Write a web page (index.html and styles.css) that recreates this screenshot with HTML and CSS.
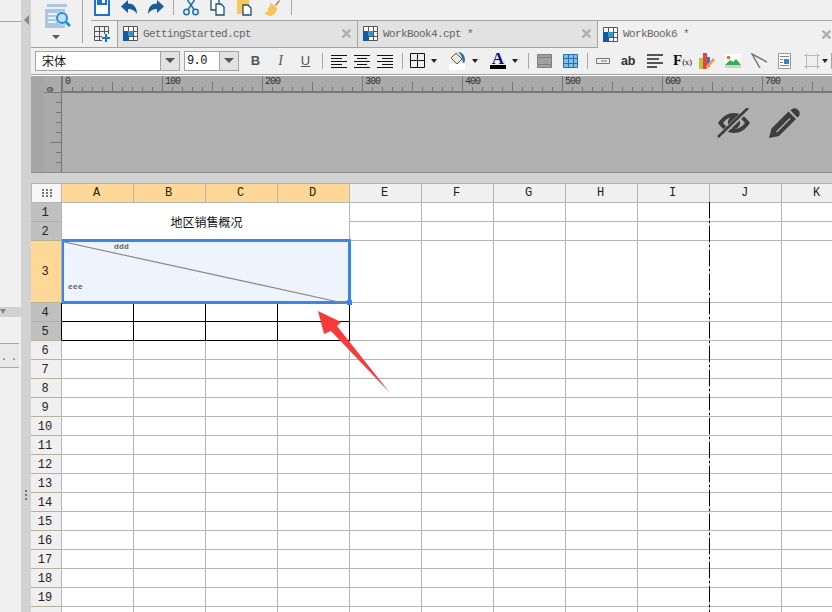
FILE: index.html
```html
<!DOCTYPE html>
<html lang="zh">
<head>
<meta charset="utf-8">
<title>WorkBook6</title>
<link rel="stylesheet" href="styles.css">
</head>
<body>
<div class="app">
  <aside class="side">
    <div class="side-top"></div>
    <div class="side-bar"><span class="side-tri"></span></div>
    <div class="side-btn">. .</div>
  </aside>
  <div class="split">
    <span class="split-tri"></span>
    <span class="split-dots"></span>
  </div>
  <main class="main">
    <div class="top">
      <div class="preview">
        <svg width="26" height="24" viewBox="0 0 26 24"><path fill="#a9c6e2" d="M2 0h20v3H2zM0 5h20v19H0z"/><path fill="#f0f0f0" d="M3 9h10v2H3zM3 13h7v2H3zM3 17h8v2H3z"/><circle cx="17" cy="14" r="6.5" fill="#f0f0f0"/><circle cx="17" cy="14" r="5" fill="#bfe0f7" stroke="#1d8fdc" stroke-width="2"/><path d="M21 18l4 4" stroke="#1d8fdc" stroke-width="3"/></svg>
        <span class="tri tri-preview"></span>
      </div>
      <div class="top-right">
        <div class="quick">
          <svg class="qi" width="16" height="16" viewBox="0 0 16 16"><path fill="#fff" stroke="#1e6fdc" stroke-width="2" d="M1 -2h14v17H1z"/><path fill="#1e6fdc" d="M3 0h10v5H3z"/><path fill="#fff" d="M8 0h3v3H8z"/></svg>
          <svg class="qi" width="16" height="15" viewBox="0 0 16 15"><path fill="#1a5d97" d="M0 6.5L7 0v3.5c5 0 9 3 9 10.500c-2-3.500-5-5-9-5v4z"/></svg>
          <svg class="qi" width="16" height="15" viewBox="0 0 16 15"><path fill="#1a5d97" d="M16 6.500L9 0v3.500c-5 0-9 3-9 10.500c2-3.500 5-5 9-5v4z"/></svg>
          <span class="sep sep-quick"></span>
          <svg class="qi ml9" width="16" height="16" viewBox="0 0 16 16"><g fill="none" stroke="#1b6fb5" stroke-width="1.500"><circle cx="3.500" cy="12" r="2.700"/><circle cx="12.500" cy="12" r="2.700"/><path d="M5 9.500L11.500 0M11 9.500L4.500 0"/></g></svg>
          <svg class="qi ml10" width="16" height="16" viewBox="0 0 16 16"><g fill="#fff" stroke="#1c4f7a" stroke-width="1.300"><path d="M1 -2h8v12H1z"/><path d="M6 4h5l3 3v8H6z"/></g></svg>
          <svg class="qi ml11" width="16" height="16" viewBox="0 0 16 16"><path fill="#f8c85a" d="M0 0h12v14H0z"/><path fill="#fff" stroke="#1c4f7a" stroke-width="1.300" d="M6 5h5l3 3v7H6z"/></svg>
          <svg class="qi ml11" width="16" height="16" viewBox="0 0 16 16"><path fill="#a67c3c" d="M11 5l4-5 1 1-4 5z"/><path fill="#f6c25c" d="M7 3l6 5c0 4-3 7-6 8-2 0-5-1-7-3 3 0 4-2 4-4z"/></svg>
          <span class="sep sep-quick ml9"></span>
        </div>
        <div class="tabs">
          <div class="tab-new">
            <svg width="16" height="16" viewBox="0 0 16 16"><path fill="none" stroke="#555" d="M.5.500h14v14H.5zM5.500.500v14M10.500.500v14M.5 5.500h14M.5 10.500h14"/><path fill="#f0f0f0" d="M8 8h8v8H8z"/><path fill="#1272c4" d="M11 8h2v3h3v2h-3v3h-2v-3H8v-2h3z"/></svg>
          </div>
          <div class="tab tab-one">
            <svg class="tab-icon" width="15" height="15" viewBox="0 0 15 15"><path fill="#fff" stroke="#555" d="M.5.500h14v14H.5zM5.500.500v14M10.500.500v14M.5 5.500h14M.5 10.500h14"/><path fill="#125a9e" d="M0 5h5v10H0z"/><path fill="#2a9ad8" d="M5 5h5v5H5z"/><path fill="#125a9e" d="M5 11h1v4H5z"/></svg>
            <span class="tab-name">GettingStarted.cpt</span>
            <svg class="tab-x" width="9" height="9" viewBox="0 0 9 9"><path stroke="#b0b0b0" stroke-width="2.400" d="M.5.500l8 8M8.500.500l-8 8"/></svg>
          </div>
          <div class="tab tab-two">
            <svg class="tab-icon" width="15" height="15" viewBox="0 0 15 15"><path fill="#fff" stroke="#555" d="M.5.500h14v14H.5zM5.500.500v14M10.500.500v14M.5 5.500h14M.5 10.500h14"/><path fill="#125a9e" d="M0 5h5v10H0z"/><path fill="#2a9ad8" d="M5 5h5v5H5z"/><path fill="#125a9e" d="M5 11h1v4H5z"/></svg>
            <span class="tab-name">WorkBook4.cpt *</span>
            <svg class="tab-x" width="9" height="9" viewBox="0 0 9 9"><path stroke="#b0b0b0" stroke-width="2.400" d="M.5.500l8 8M8.500.500l-8 8"/></svg>
          </div>
          <div class="tab tab-active">
            <svg class="tab-icon" width="15" height="15" viewBox="0 0 15 15"><path fill="#fff" stroke="#555" d="M.5.500h14v14H.5zM5.500.500v14M10.500.500v14M.5 5.500h14M.5 10.500h14"/><path fill="#125a9e" d="M0 5h5v10H0z"/><path fill="#2a9ad8" d="M5 5h5v5H5z"/><path fill="#125a9e" d="M5 11h1v4H5z"/></svg>
            <span class="tab-name">WorkBook6 *</span>
            <svg class="tab-x" width="9" height="9" viewBox="0 0 9 9"><path stroke="#b0b0b0" stroke-width="2.400" d="M.5.500l8 8M8.500.500l-8 8"/></svg>
          </div>
        </div>
      </div>
    </div>

    <div class="fmt">
      <div class="combo combo-font"><span class="combo-text cjk">宋体</span><span class="combo-btn"><span class="tri tri-combo"></span></span></div>
      <div class="combo combo-size"><span class="combo-text mono">9.0</span><span class="combo-btn"><span class="tri tri-combo"></span></span></div>
      <span class="tb tb-b">B</span>
      <span class="tb tb-i">I</span>
      <span class="tb tb-u">U</span>
      <span class="sep sep-fmt"></span>
      <svg class="al first" width="16" height="14" viewBox="0 0 16 14"><path stroke="#111" d="M0 1.500h16M0 4.500h11M0 7.500h16M0 10.500h11M0 13.500h16"/></svg>
      <svg class="al" width="16" height="14" viewBox="0 0 16 14"><path stroke="#111" d="M0 1.500h16M3 4.500h10M0 7.500h16M3 10.500h10M0 13.500h16"/></svg>
      <svg class="al" width="16" height="14" viewBox="0 0 16 14"><path stroke="#111" d="M0 1.500h16M5 4.500h11M0 7.500h16M5 10.500h11M0 13.500h16"/></svg>
      <span class="sep sep-fmt ml9"></span>
      <svg class="ml7" width="15" height="15" viewBox="0 0 15 15"><path fill="none" stroke="#111" d="M.5.500h14v14H.5zM7.500.500v14M.5 7.500h14"/></svg>
      <span class="tri tri-small ml6"></span>
      <svg class="ml12" width="17" height="19" viewBox="0 0 17 19"><path fill="#fff" d="M0 13h16v6H0z"/><path fill="#f0e8d8" stroke="#555" d="M2 7l5-5 6 6-5 5z"/><path fill="#2d6ea8" d="M9 1c4 0 7 3 7 8 0 2-1 3-2 3l-1-5c-1-3-2-4-4-6z"/></svg>
      <span class="tri tri-small ml6"></span>
      <div class="color-a ml12"><span class="color-letter">A</span><span class="color-bar"></span></div>
      <span class="tri tri-small ml6"></span>
      <span class="sep sep-fmt ml10"></span>
      <svg class="ml8" width="15" height="14" viewBox="0 0 15 14"><path fill="#a0a0a0" stroke="#808080" d="M.5.500h14v13H.5z"/><path fill="none" stroke="#808080" d="M.5 3.500h14M.5 10.500h14"/></svg>
      <svg class="ml11" width="15" height="14" viewBox="0 0 15 14"><path fill="#7cc0ec" stroke="#2f6ea6" d="M.5.500h14v13H.5z"/><path fill="none" stroke="#2f6ea6" d="M5.500.500v13M10.500.500v13M.5 4.500h14M.5 9.500h14"/></svg>
      <span class="sep sep-fmt ml9"></span>
      <svg class="ml8" width="14" height="6" viewBox="0 0 14 6"><path fill="none" stroke="#777" d="M.5.500h13v5H.5z"/><path stroke="#777" d="M5 3h6"/></svg>
      <span class="tb-ab">ab</span>
      <svg class="ml12" width="16" height="14" viewBox="0 0 16 14"><path fill="#555" d="M0 0h16v2H0zM0 4h12v2H0zM0 8h16v2H0zM0 12h10v2H0z"/></svg>
      <span class="tb-fx">F<small>(x)</small></span>
      <svg class="ml6" width="16" height="16" viewBox="0 0 16 16"><path fill="#b7c23f" d="M0 5h4v11H0z"/><path fill="#e8413c" d="M4 0h4v16H4z"/><path fill="#2a78c8" d="M8 4h3v10H8z"/><path fill="#f59a4a" d="M7 13l7-8 2 2-7 8-2 1z"/></svg>
      <svg class="ml10" width="16" height="14" viewBox="0 0 16 14"><path fill="#fff" d="M0 0h16v11H0z"/><path fill="#d0d0d0" d="M0 11h16v3H0z"/><path fill="#2fb14f" d="M0 11l5-5 3 2 3-3 5 6z"/><path fill="#e96a3a" d="M2 2h3v3H2z"/></svg>
      <svg class="ml10" width="16" height="15" viewBox="0 0 16 15"><path fill="none" stroke="#777" stroke-width="1.500" d="M9 15L1 1l15 8"/></svg>
      <svg class="ml11" width="13" height="16" viewBox="0 0 13 16"><path fill="#fff" stroke="#999" d="M.5.500h12v15H.5z"/><path fill="#888" d="M2 3h9v1H2zM2 6h3v1H2zM2 9h3v1H2zM2 12h9v1H2z"/><path fill="#2a8ad0" d="M6 6h5v5H6z"/></svg>
      <svg class="ml13" width="16" height="16" viewBox="0 0 16 16"><path fill="none" stroke="#b8b8b8" d="M2.500 0v16M13.500 0v16M0 2.500h16M0 13.500h16"/></svg>
      <span class="tri tri-small ml2"></span>
      <span class="sep sep-fmt ml3"></span>
    </div>
    <div class="white-line"></div>

    <div class="stage">
      <div class="vruler">
        <div class="vband">
          <div class="vcorner"><span class="vzero">0</span></div>
          <div class="vticks"></div>
        </div>
      </div>
      <div class="stage-right">
        <div class="hruler">
          <span class="rl">0</span><span class="rl">100</span><span class="rl">200</span><span class="rl">300</span><span class="rl">400</span><span class="rl">500</span><span class="rl">600</span><span class="rl">700</span>
        </div>
        <div class="canvas">
          <svg width="34" height="30" viewBox="0 0 34 30"><path fill="#3d3d3d" fill-rule="evenodd" d="M1 15C6 8 11 5 17 5s11 3 16 10c-5 7-10 10-16 10S6 22 1 15zm5 0c3 4 7 6 11 6 4 0 8-2 11-6-2-3-5-5-8-6 2 1 3 3 3 6 0 3-3 6-6 6s-6-3-6-6c0-3 1-5 3-6-3 1-6 3-8 6z"/><path stroke="#b0b0b0" stroke-width="5" d="M2 29L31 1"/><path stroke="#3d3d3d" stroke-width="2.500" d="M1 29L31 0"/></svg>
          <svg width="31" height="30" viewBox="0 0 31 30"><path fill="#3d3d3d" fill-rule="evenodd" d="M0 30L2.500 20.500 19.500 3.500 27 11 10 28zM7 23.500L8 24.500 21.500 11 20.500 10z"/><path fill="#3d3d3d" d="M21.500 2.500c2-2.500 5-3 7-1l1 1c2 2 1.500 5-1 7z"/></svg>
        </div>
      </div>
    </div>
    <div class="gap"></div>

    <div class="sheet">
      <div class="row-head">
        <div class="corner"><span class="corner-dots"></span></div>
        <div class="ch sel">A</div><div class="ch sel">B</div><div class="ch sel">C</div><div class="ch sel">D</div>
        <div class="ch">E</div><div class="ch">F</div><div class="ch">G</div><div class="ch">H</div><div class="ch">I</div><div class="ch">J</div><div class="ch">K</div>
      </div>
      <div class="row"><div class="rh merged">1</div><div class="cells"></div></div>
      <div class="row"><div class="rh merged">2</div><div class="cells"></div></div>
      <div class="row row-tall"><div class="rh sel">3</div><div class="cells"></div></div>
      <div class="row"><div class="rh merged black">4</div><div class="cells"><div class="bk"></div><div class="bk"></div><div class="bk"></div><div class="bk"></div></div></div>
      <div class="row"><div class="rh merged black">5</div><div class="cells"><div class="bk"></div><div class="bk"></div><div class="bk"></div><div class="bk"></div></div></div>
      <div class="row"><div class="rh">6</div><div class="cells"></div></div>
      <div class="row"><div class="rh">7</div><div class="cells"></div></div>
      <div class="row"><div class="rh">8</div><div class="cells"></div></div>
      <div class="row"><div class="rh">9</div><div class="cells"></div></div>
      <div class="row"><div class="rh">10</div><div class="cells"></div></div>
      <div class="row"><div class="rh">11</div><div class="cells"></div></div>
      <div class="row"><div class="rh">12</div><div class="cells"></div></div>
      <div class="row"><div class="rh">13</div><div class="cells"></div></div>
      <div class="row"><div class="rh">14</div><div class="cells"></div></div>
      <div class="row"><div class="rh">15</div><div class="cells"></div></div>
      <div class="row"><div class="rh">16</div><div class="cells"></div></div>
      <div class="row"><div class="rh">17</div><div class="cells"></div></div>
      <div class="row"><div class="rh">18</div><div class="cells"></div></div>
      <div class="row"><div class="rh">19</div><div class="cells"></div></div>
      <div class="row"><div class="rh"></div><div class="cells"></div></div>

      <div class="title cjk">地区销售概况</div>
      <div class="selection">
        <svg class="diag" width="284" height="62" viewBox="0 0 284 62"><path stroke="#888" stroke-width="1.200" d="M0 0L284 62"/></svg>
        <span class="slash-top">ddd</span>
        <span class="slash-bottom">eee</span>
        <span class="handle"></span>
      </div>
      <div class="page-break"></div>
      <svg class="arrow" width="73" height="83" viewBox="0 0 73 83"><path fill="#f73b3b" d="M0 0L23 11 19 15 72 82 13 20 6 23z"/></svg>
    </div>
  </main>
</div>
</body>
</html>
```

FILE: styles.css
```css
* { box-sizing: border-box; }
html, body { margin: 0; padding: 0; height: 100%; overflow: hidden; background: #f0f0f0; }
body { font-family: "Liberation Mono", monospace; color: #222; }
svg { display: block; flex: none; }
.cjk { font-family: "Noto Sans CJK SC", "Liberation Sans", sans-serif; }
.mono { font-family: "Liberation Mono", monospace; }

.app { display: flex; width: 832px; height: 612px; overflow: hidden; }

/* left dock */
.side { width: 21px; flex: none; display: flex; flex-direction: column; background: #f0f0f0; }
.side-top { height: 22px; margin-bottom: 285px; border-bottom: 1px solid #a4a4a4; }
.side-bar { height: 10px; background: #d2d2d2; }
.side-tri { display: block; width: 0; border-style: solid; border-width: 5px 3.500px 0; border-color: #888 transparent transparent; margin-top: 2px; }
.side-btn { margin-top: 26px; width: 19px; height: 25px; background: #e9e9e9; border-top: 1px solid #a8a8a8; border-bottom: 1px solid #a8a8a8; font-size: 10px; line-height: 27px; white-space: nowrap; overflow: hidden; padding-left: 1px; letter-spacing: -1px; color: #555; }
.split { width: 10px; flex: none; background: #d2d2d2; position: relative; }
.split-tri { position: absolute; left: 3px; top: 15px; width: 0; border-style: solid; border-width: 5px 5px 5px 0; border-color: transparent #888 transparent transparent; }
.split-dots { position: absolute; left: 4px; top: 490px; width: 2px; height: 10px; background: repeating-linear-gradient(#777 0 2px, transparent 2px 4px); }

.main { width: 801px; flex: none; display: flex; flex-direction: column; background: #f0f0f0; }

/* top toolbars */
.top { display: flex; height: 48px; flex: none; }
.preview { width: 60px; flex: none; position: relative; padding: 4px 0 0 14px; border-bottom: 1px solid #a4a4a4; }
.preview::after { content: ""; position: absolute; left: 51px; top: 0; width: 1px; height: 43px; background: #a8a8a8; }
.tri { display: block; width: 0; border-style: solid; border-color: #555 transparent transparent; flex: none; }
.tri-preview { border-width: 4px 4.500px 0; margin: 7px 0 0 7px; }
.top-right { flex: 1; min-width: 0; display: flex; flex-direction: column; }
.quick { height: 20px; display: flex; align-items: flex-start; padding-left: 3px; overflow: hidden; }
.qi { margin-right: 11px; margin-top: 0; }
.sep { display: block; width: 1px; background: #a8a8a8; flex: none; }
.sep-quick { height: 15px; margin-left: -2px; }
.ml9.sep-quick { margin-left: -2px; }
.quick .ml9 { margin-left: 0; }
.quick .ml10 { margin-left: 0; }
.quick .ml11 { margin-left: 0; }
.quick .sep { margin-right: 9px; }
.quick .qi:last-of-type { margin-right: 11px; }

.tabs { height: 28px; display: flex; border-top: 1px solid #a4a4a4; }
.tab-new { width: 27px; flex: none; padding: 5px 0 0 3px; border-right: 1px solid #a4a4a4; border-bottom: 1px solid #a4a4a4; background: #f0f0f0; }
.tab { width: 240px; flex: none; display: flex; align-items: center; padding: 0 6px 1px 5px; background: #e2e2e2; border-right: 1px solid #a4a4a4; border-bottom: 1px solid #a4a4a4; }
.tab-two { padding-right: 6px; }
.tab-active { background: #f0f0f0; border-right: 0; border-bottom: 0; width: 235px; padding-right: 2px; }
.tab-icon { margin-right: 5px; }
.tab-name { flex: 1; font-size: 11px; letter-spacing: -.6px; color: #666; white-space: nowrap; }

/* format bar */
.fmt { height: 27px; flex: none; display: flex; align-items: center; padding: 0 0 1px 4px; border-bottom: 1px solid #a4a4a4; }
.combo { height: 20px; display: flex; background: #fff; border: 1px solid #a4a4a4; flex: none; }
.combo-font { width: 145px; }
.combo-size { width: 55px; margin-left: 4px; }
.combo-text { flex: 1; font-size: 12px; line-height: 18px; padding-left: 6px; color: #111; }
.combo-size .combo-text { padding-left: 2px; font-size: 12px; letter-spacing: -.6px; }
.combo-btn { width: 19px; flex: none; background: #e2e2e2; border-left: 1px solid #a4a4a4; display: flex; align-items: center; justify-content: center; }
.tri-combo { border-width: 5px 5px 0; border-top-color: #555; }
.tb { width: 25px; flex: none; text-align: center; font-size: 13px; color: #555; }
.tb-b { margin-left: 4px; font-family: "Liberation Sans", sans-serif; font-weight: 700; }
.tb-i { font-family: "Liberation Serif", serif; font-style: italic; font-size: 14px; }
.tb-u { font-family: "Liberation Sans", sans-serif; text-decoration: underline; }
.sep-fmt { height: 16px; margin-left: 4px; }
.al { margin-left: 7px; }
.al.first { margin-left: 8px; }
.ml2 { margin-left: 2px; } .ml3 { margin-left: 3px; } .ml6 { margin-left: 6px; } .ml7 { margin-left: 7px; }
.ml8 { margin-left: 8px; } .ml9 { margin-left: 9px; } .ml10 { margin-left: 10px; } .ml11 { margin-left: 11px; }
.ml12 { margin-left: 12px; } .ml13 { margin-left: 13px; }
.tri-small { border-width: 4px 3.500px 0; border-top-color: #222; }
.color-a { width: 16px; flex: none; height: 17px; display: flex; flex-direction: column; align-items: center; }
.color-letter { font-family: "Liberation Serif", serif; font-weight: 700; font-size: 17px; line-height: 13px; color: #0b0b8c; }
.color-bar { width: 16px; height: 4px; background: #000; margin-top: auto; }
.tb-ab { margin-left: 11px; width: 14px; font-family: "Liberation Sans", sans-serif; font-weight: 700; font-size: 12.500px; letter-spacing: -.2px; color: #333; }
.tb-fx { margin-left: 10px; width: 20px; overflow: hidden; font-family: "Liberation Serif", serif; font-weight: 700; font-size: 15px; color: #111; white-space: nowrap; }
.tb-fx small { font-size: 9px; font-weight: 400; letter-spacing: -.3px; }
.white-line { height: 1px; flex: none; background: #fff; }

/* ruler + canvas */
.stage { height: 97px; flex: none; display: flex; background: #ababab; }
.vruler { width: 31px; flex: none; padding-left: 13px; background: #a6a6a6; border-right: 1px solid #777; border-bottom: 1px solid #8c8c8c; }
.vband { height: 100%; background: #aaa; display: flex; flex-direction: column; }
.vcorner { height: 17px; flex: none; position: relative; border-bottom: 1px solid #777; }
.vzero { position: absolute; left: 2px; top: 9px; font-size: 9px; line-height: 9px; color: #333; transform: rotate(90deg); }
.vticks { flex: 1; background:
  repeating-linear-gradient(transparent 0 49px, #777 49px 50px) right top / 11px 100% no-repeat,
  repeating-linear-gradient(transparent 0 9px, #777 9px 10px) right top / 5px 100% no-repeat; }
.stage-right { flex: 1; min-width: 0; display: flex; flex-direction: column; }
.hruler { height: 17px; flex: none; display: flex; border-bottom: 2px solid #777; background:
  repeating-linear-gradient(90deg, #777 0 1px, transparent 1px 100px) left bottom / 100% 100% no-repeat,
  repeating-linear-gradient(90deg, #777 0 1px, transparent 1px 50px) left bottom / 100% 9px no-repeat,
  repeating-linear-gradient(90deg, #777 0 1px, transparent 1px 10px) left bottom / 100% 4px no-repeat,
  #a9a9a9; }
.rl { width: 100px; flex: none; font-size: 10px; letter-spacing: -1px; line-height: 12px; padding-left: 3px; color: #333; }
.canvas { flex: 1; display: flex; justify-content: flex-end; gap: 18px; padding: 15px 32px 0 0; background: #b0b0b0; border-bottom: 1px solid #8c8c8c; }
.gap { height: 10px; flex: none; background: #d2d2d2; }

/* sheet */
.sheet { position: relative; flex: 1; min-height: 0; overflow: hidden; background: #fff; font-size: 12px; color: #222; }
.row-head { display: flex; height: 20px; border-top: 1px solid #b4b4b4; border-bottom: 1px solid #b4b4b4; }
.corner { width: 31px; flex: none; background: #f6f6f6; border-left: 1px solid #b4b4b4; border-right: 1px solid #b4b4b4; display: flex; align-items: center; justify-content: center; }
.corner-dots { width: 10px; height: 8px; background:
  repeating-linear-gradient(90deg, #777 0 2px, transparent 2px 4px),
  transparent; -webkit-mask: repeating-linear-gradient(#000 0 2px, transparent 2px 3px); mask: repeating-linear-gradient(#000 0 2px, transparent 2px 3px); }
.ch { width: 72px; flex: none; text-align: center; padding-right: 2px; line-height: 19px; background: #f0f0f0; border-right: 1px solid #b4b4b4; }
.ch.sel { background: #ffd797; }
.row { display: flex; height: 19px; }
.row-tall { height: 62px; }
.rh { width: 31px; flex: none; text-align: center; padding-right: 2px; background: #f0f0f0; border-right: 1px solid #b4b4b4; border-bottom: 1px solid #b5b29a; line-height: 20px; }
.rh.merged { background: #c0c0c0; }
.rh.sel { background: #ffd797; line-height: 62px; }
.rh.black { border-right-color: #000; }
.cells { flex: 1; display: flex; border-bottom: 1px solid #b4b4b4; background: repeating-linear-gradient(90deg, transparent 0 71px, #b4b4b4 71px 72px); }
.bk { width: 72px; height: 19px; flex: none; background: #fff; border-right: 1px solid #000; border-bottom: 1px solid #000; }

.title { position: absolute; left: 31px; top: 20px; width: 288px; height: 37px; padding-left: 2px; background: #fff; border-right: 1px solid #b4b4b4; text-align: center; line-height: 38px; font-size: 12px; color: #111; }
.selection { position: absolute; left: 31px; top: 56px; width: 289px; height: 65px; background: #edf4fd; border: 3px solid #3a85ea; border-left-width: 2px; }
.diag { position: absolute; left: 0; top: 0; }
.slash-top, .slash-bottom { position: absolute; font-size: 8px; line-height: 8px; letter-spacing: .2px; color: #666; font-weight: 700; }
.slash-top { left: 50px; top: 1px; }
.slash-bottom { left: 4px; top: 41px; }
.handle { position: absolute; right: -4px; bottom: -4px; width: 5px; height: 5px; background: #3a85ea; }
.page-break { position: absolute; left: 678px; top: 19px; bottom: 0; width: 1px; background: repeating-linear-gradient(#000 0 16px, transparent 16px 19px, #000 19px 21px, transparent 21px 24px); }
.arrow { position: absolute; left: 287px; top: 128px; }
```
